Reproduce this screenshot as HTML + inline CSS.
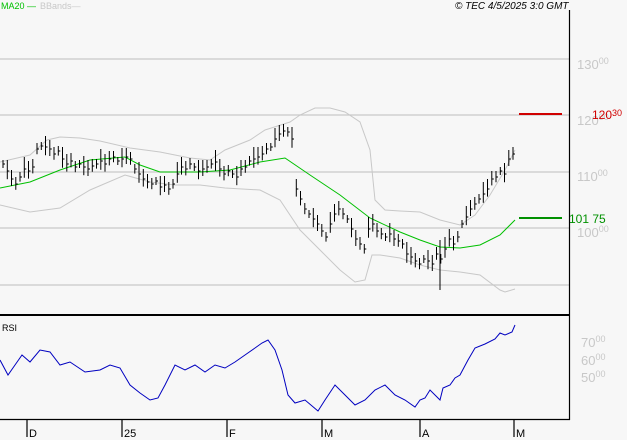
<!DOCTYPE html>
<html><head><style>
body{margin:0;background:#f7f7f7;width:627px;height:440px;overflow:hidden;font-family:"Liberation Sans",sans-serif}
svg{display:block}
text{font-family:"Liberation Sans",sans-serif}
</style></head><body>
<svg id="s" width="627" height="440" xmlns="http://www.w3.org/2000/svg">
<rect width="627" height="440" fill="#f7f7f7"/>
<g stroke="#c8c8c8" stroke-width="1.2">
<line x1="0" y1="59" x2="569" y2="59"/><line x1="0" y1="115" x2="569" y2="115"/>
<line x1="0" y1="172" x2="569" y2="172"/><line x1="0" y1="228" x2="569" y2="228"/>
<line x1="0" y1="285" x2="569" y2="285"/>
</g>
<g fill="#c8c8c8" font-size="13">
<text x="577" y="69">130<tspan font-size="9" dy="-5">00</tspan></text>
<text x="577" y="125">120<tspan font-size="9" dy="-5">00</tspan></text>
<text x="577" y="181">110<tspan font-size="9" dy="-5">00</tspan></text>
<text x="577" y="237">100<tspan font-size="9" dy="-5">00</tspan></text>
<text x="581" y="347">70<tspan font-size="9" dy="-5">00</tspan></text>
<text x="581" y="365">60<tspan font-size="9" dy="-5">00</tspan></text>
<text x="581" y="382">50<tspan font-size="9" dy="-5">00</tspan></text>
</g>
<line x1="519" y1="114" x2="562" y2="114" stroke="#d00000" stroke-width="2"/>
<text x="592" y="119" fill="#d00000" font-size="12">120<tspan font-size="9" dy="-3">30</tspan></text>
<line x1="519" y1="218" x2="562" y2="218" stroke="#009000" stroke-width="2"/>
<text x="569" y="223" fill="#009000" font-size="12">101 75</text>
<text x="1" y="9" fill="#00c000" font-size="9">MA20 —</text>
<text x="40" y="9" fill="#c8c8c8" font-size="9">BBands—</text>
<text x="455" y="9" fill="#000" font-size="10" font-style="italic">© TEC 4/5/2025 3:0 GMT</text>
<polyline fill="none" stroke="#c8c8c8" points="0,162 30,155 47,140 60,137 80,138 100,141 130,148 160,152 190,158 210,160 225,150 250,140 265,130 290,122 300,115 315,108 330,108 345,112 360,122 370,150 375,200 385,210 400,211 420,212 440,220 460,225 475,215 490,195 505,170 515,150"/>
<polyline fill="none" stroke="#c8c8c8" points="0,205 30,212 60,208 90,190 125,175 150,182 175,185 200,185 225,188 260,190 280,200 300,230 320,250 340,270 355,282 365,280 372,255 380,255 400,258 420,265 440,270 460,272 480,275 500,290 505,292 515,289"/>
<polyline fill="none" stroke="#00c000" points="0,188 30,182 60,170 90,160 125,157 140,165 160,172 200,172 230,170 260,162 285,158 310,175 340,195 370,218 400,232 420,240 440,247 460,248 480,245 500,235 515,220"/>
<g id="bars" stroke="#000" stroke-width="1"></g>
<polyline fill="none" stroke="#0000c0" points="0,360 8,375 15,365 22,355 30,362 40,350 50,352 60,365 70,362 85,372 100,370 110,365 120,368 130,385 140,393 150,400 158,398 165,385 175,365 185,370 195,365 205,372 215,365 225,368 235,362 245,355 255,348 262,343 268,340 275,350 282,370 288,395 295,403 305,400 318,411 325,400 335,385 345,395 355,405 365,400 375,390 385,385 395,395 405,400 415,407 420,400 425,398 430,390 440,400 443,388 450,385 455,378 460,375 468,360 475,348 485,344 495,339 500,333 505,335 512,332 515,325"/>
<text x="2" y="331" fill="#000" font-size="9">RSI</text>
<line x1="569.5" y1="10" x2="569.5" y2="420" stroke="#000" stroke-width="1.2"/>
<line x1="0" y1="315" x2="570" y2="315" stroke="#000" stroke-width="2"/>
<line x1="0" y1="419.5" x2="570" y2="419.5" stroke="#000" stroke-width="1.2"/>
<g stroke="#000" stroke-width="1.2">
<line x1="27" y1="419" x2="27" y2="437"/><line x1="122" y1="419" x2="122" y2="437"/>
<line x1="227" y1="419" x2="227" y2="437"/><line x1="322" y1="419" x2="322" y2="437"/>
<line x1="420" y1="419" x2="420" y2="437"/><line x1="514" y1="419" x2="514" y2="437"/>
</g>
<g font-size="11" fill="#000">
<text x="29" y="437">D</text><text x="124" y="437">25</text><text x="229" y="437">F</text>
<text x="324" y="437">M</text><text x="422" y="437">A</text><text x="516" y="437">M</text>
</g>
</svg>
<script>
var c=[165,172,180,185,178,170,172,168,150,147,148,150,155,152,160,165,162,168,165,168,170,167,165,162,165,160,158,162,160,158,160,170,175,180,183,185,182,188,186,190,185,175,168,170,165,168,172,170,168,165,163,170,175,172,175,178,170,168,162,160,158,155,150,148,140,135,132,133,140,190,200,210,215,220,225,232,238,225,215,210,215,220,230,240,245,250,230,225,232,235,238,235,240,242,245,255,258,262,265,260,262,265,255,260,250,240,245,238,225,218,210,205,200,195,190,180,178,172,175,160,155];
var g=document.getElementById('bars'),n=c.length,h='';
for(var i=0;i<n;i++){var x=3+i*(510/(n-1));var y=c[i];var r=5+((i*7)%9);
h+='<line x1="'+x.toFixed(1)+'" y1="'+(y-r)+'" x2="'+x.toFixed(1)+'" y2="'+(y+r*0.6)+'"/>'+
'<line x1="'+x.toFixed(1)+'" y1="'+(y-1)+'" x2="'+(x+2).toFixed(1)+'" y2="'+(y-1)+'"/>';}
h+='<line x1="440" y1="240" x2="440" y2="290"/>';
g.innerHTML=h;
</script>
</body></html>
